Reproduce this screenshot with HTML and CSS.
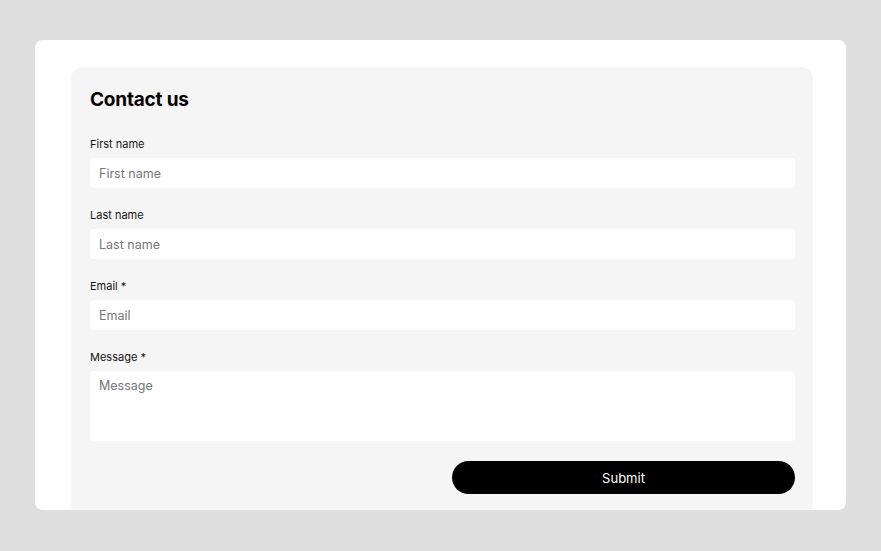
FILE: index.html
```html
<!DOCTYPE html>
<html lang="en">
<head>
  <meta charset="UTF-8">
  <meta name="viewport" content="width=device-width, initial-scale=1.0">
  <title>Contact us</title>
  <link rel="stylesheet" href="styles.css">
</head>
<body>
  <div class="card">
    <form class="panel" onsubmit="return false">
      <h2>Contact us</h2>

      <div class="field">
        <label for="first">First name</label>
        <input type="text" id="first" placeholder="First name">
      </div>

      <div class="field">
        <label for="last">Last name</label>
        <input type="text" id="last" placeholder="Last name">
      </div>

      <div class="field">
        <label for="email">Email *</label>
        <input type="email" id="email" placeholder="Email">
      </div>

      <div class="field">
        <label for="message">Message *</label>
        <textarea id="message" placeholder="Message"></textarea>
      </div>

      <div class="actions">
        <button type="submit">Submit</button>
      </div>
    </form>
  </div>
</body>
</html>
```

FILE: styles.css
```css
body {
  font-family: Inter, 'Noto Sans', sans-serif;
  margin: 0;
  padding: 40px 35px 0;
  background: #dfdfdf;
  color: #000;
}

.card {
  width: 742px;
  height: 443px;
  padding: 27px 33px 0 36px;
  background: #ffffff;
  border-radius: 8px;
}

.panel {
  height: 100%;
  box-sizing: border-box;
  padding: 21px 18px 16px 19px;
  background: #f5f5f5;
  border-radius: 12px 12px 4px 4px;
  display: flex;
  flex-direction: column;
}

h2 {
  margin: 0 0 24px;
  font-size: 19px;
  line-height: 24px;
  font-weight: 700;
  letter-spacing: -0.2px;
}

.field {
  display: flex;
  flex-direction: column;
  margin-bottom: 19px;
}

.field label {
  font-size: 11px;
  line-height: 16px;
  margin-bottom: 6px;
  color: #151414;
}

input, textarea {
  font-family: inherit;
  font-size: 12.5px;
  color: #000;
  border: none;
  border-radius: 4px;
  background: #ffffff;
  padding: 0 9px;
  outline: none;
}

input {
  height: 30px;
}

textarea {
  height: 70px;
  box-sizing: border-box;
  padding: 7px 9px;
  resize: none;
}

input::placeholder, textarea::placeholder {
  color: #767676;
}

.actions {
  display: flex;
  justify-content: flex-end;
  margin-top: 1px;
}

button {
  width: 343px;
  height: 33px;
  border: none;
  border-radius: 17px;
  background: #000;
  color: #fff;
  font-family: inherit;
  font-size: 13px;
  cursor: pointer;
}
```
